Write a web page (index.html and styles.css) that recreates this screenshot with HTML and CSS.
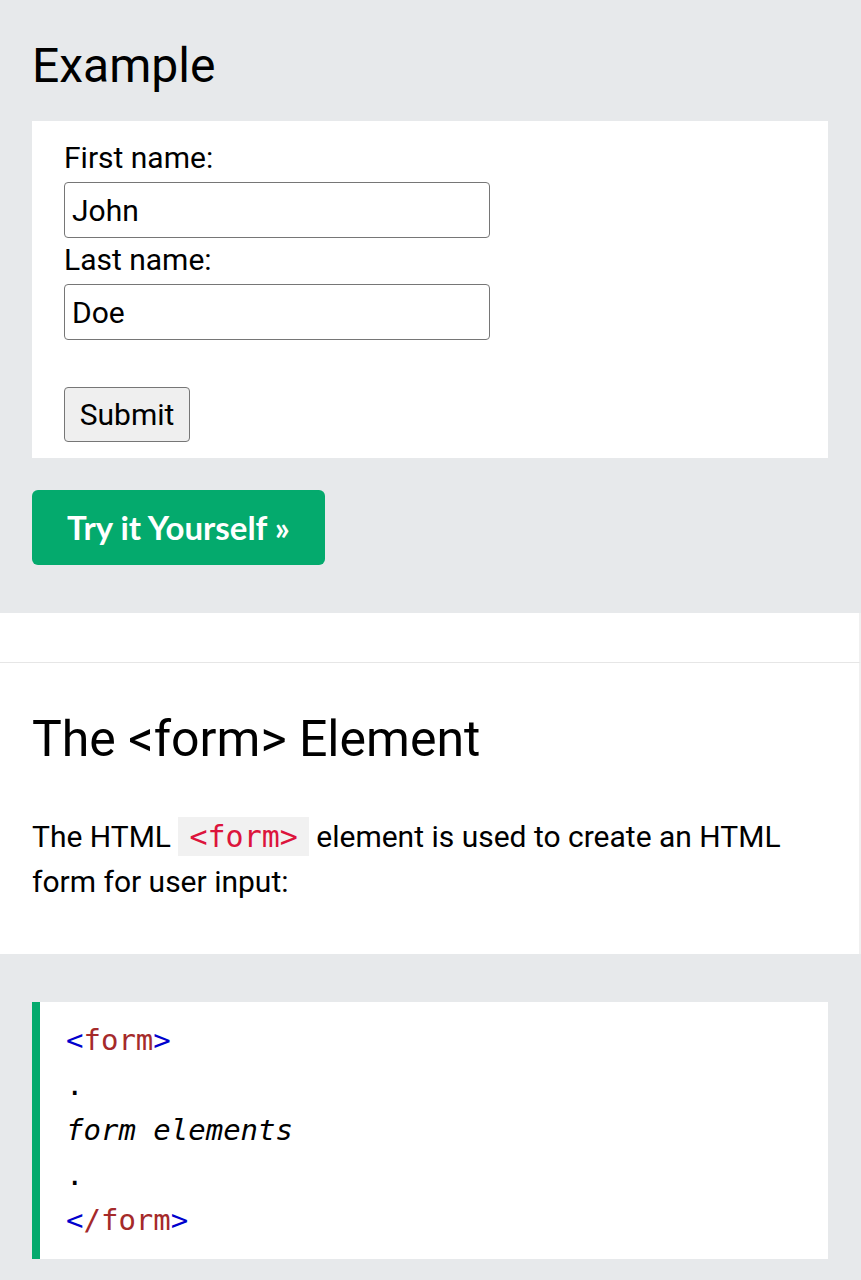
FILE: index.html
```html
<!DOCTYPE html>
<html lang="en">
<head>
<meta charset="utf-8">
<title>The form Element</title>
<link rel="stylesheet" href="styles.css">
</head>
<body>
<section class="example">
  <h2 class="example-title">Example</h2>
  <div class="example-output">
    <form class="demo-form">
      <label class="demo-label" for="fname">First name:</label>
      <input class="demo-input" type="text" id="fname" value="John">
      <label class="demo-label" for="lname">Last name:</label>
      <input class="demo-input" type="text" id="lname" value="Doe">
      <button class="demo-submit" type="button">Submit</button>
    </form>
  </div>
  <a class="try-btn" href="#">Try it Yourself »</a>
</section>
<div class="spacer"></div>
<section class="content">
  <h2 class="content-title">The &lt;form&gt; Element</h2>
  <p class="content-text">The HTML <code class="inline-code">&lt;form&gt;</code> element is used to create an HTML form for user input:</p>
</section>
<section class="code-section">
  <div class="code-block">
    <div class="code-line"><span class="tag-bracket">&lt;</span><span class="tag-name">form</span><span class="tag-bracket">&gt;</span></div>
    <div class="code-line">.</div>
    <div class="code-line"><em class="code-italic">form elements</em></div>
    <div class="code-line">.</div>
    <div class="code-line"><span class="tag-bracket">&lt;</span><span class="tag-name">/form</span><span class="tag-bracket">&gt;</span></div>
  </div>
</section>
</body>
</html>
```
FILE: styles.css
```css
* { box-sizing: border-box; }

html, body {
  margin: 0;
  padding: 0;
  background: #ffffff;
  font-family: Roboto, "Liberation Sans", sans-serif;
  color: #000000;
}

.example {
  background: #e7e9eb;
  padding: 36px 33px 48px 32px;
}

.example-title {
  margin: 0 0 25px 0;
  font-size: 48px;
  font-weight: 400;
  line-height: 60px;
}

.example-output {
  background: #ffffff;
  padding: 20px 32px 16px 32px;
}

.demo-form {
  display: flex;
  flex-direction: column;
  align-items: flex-start;
}

.demo-label {
  display: block;
  font-size: 30px;
  line-height: 34px;
}

.demo-input {
  display: block;
  width: 426px;
  height: 56px;
  margin: 7px 0 5px 0;
  padding: 0 7px;
  border: 1px solid #767676;
  border-radius: 4px;
  font-family: Roboto, "Liberation Sans", sans-serif;
  font-size: 30px;
  color: #000000;
  background: #ffffff;
}

.demo-submit {
  margin-top: 42px;
  width: 126px;
  height: 55px;
  padding: 0;
  border: 1px solid #767676;
  border-radius: 4px;
  background: #efefef;
  font-family: Roboto, "Liberation Sans", sans-serif;
  font-size: 30px;
  color: #000000;
}

.try-btn {
  display: inline-flex;
  align-items: center;
  justify-content: center;
  margin-top: 32px;
  width: 293px;
  height: 75px;
  padding-bottom: 2px;
  background: #04aa6d;
  border-radius: 6px;
  color: #ffffff;
  text-decoration: none;
  font-family: Lato, "Open Sans", sans-serif;
  font-weight: 700;
  font-size: 33px;
}

.spacer {
  height: 50px;
  border-bottom: 1px solid #e6e6e6;
  border-right: 2px solid #f0f0f0;
}

.content {
  padding: 46px 33px 50px 32px;
  border-right: 2px solid #f0f0f0;
}

.content-title {
  margin: 0 0 45px 0;
  font-size: 50px;
  font-weight: 400;
  line-height: 60px;
}

.content-text {
  margin: 0;
  font-size: 30px;
  line-height: 45px;
}

.inline-code {
  display: inline-block;
  font-family: "DejaVu Sans Mono", monospace;
  font-size: 30px;
  line-height: 35px;
  color: crimson;
  background: #f1f1f1;
  padding: 2px 11px;
}

.code-section {
  background: #e7e9eb;
  padding: 48px 33px 48px 32px;
}

.code-block {
  background: #ffffff;
  border-left: 8px solid #04aa6d;
  padding: 16px 26px 16px 26px;
  font-family: "DejaVu Sans Mono", monospace;
  font-size: 29px;
  line-height: 45px;
}

.code-line {
  white-space: pre;
}

.code-italic {
  font-style: italic;
}

.tag-bracket { color: mediumblue; }
.tag-name { color: brown; }
```
